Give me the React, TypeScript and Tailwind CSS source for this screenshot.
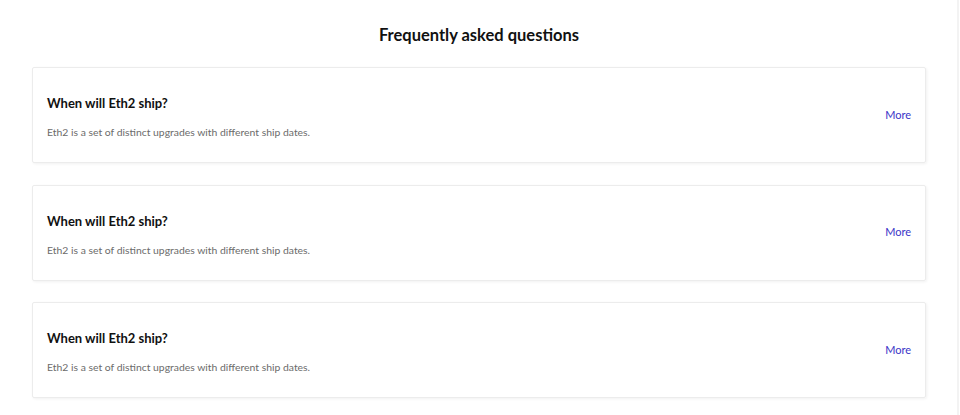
import React from 'react';

const faqs = [
  { q: 'When will Eth2 ship?', a: 'Eth2 is a set of distinct upgrades with different ship dates.' },
  { q: 'When will Eth2 ship?', a: 'Eth2 is a set of distinct upgrades with different ship dates.' },
  { q: 'When will Eth2 ship?', a: 'Eth2 is a set of distinct upgrades with different ship dates.' },
];

const App = () => {
  return (
    <div className="min-h-[415px] w-[960px] bg-white font-['Lato',sans-serif]">
      <div className="w-[959px] border-r-2 border-[#f3f3f3] min-h-[415px] pl-8 pr-[31px] pt-[23px]">
        <h1 className="text-center text-[16.5px] font-bold text-[#111] leading-6 mb-5">
          Frequently asked questions
        </h1>
        <div className="flex flex-col gap-[21.5px]">
          {faqs.map((item, i) => (
            <div
              key={i}
              className="flex items-center justify-between border border-[#ececec] rounded-[2px] shadow-[1px_1px_3px_rgba(0,0,0,0.06)] pl-[14px] pr-[14px] pt-6 pb-[21px]"
            >
              <div>
                <h2 className="text-[13px] font-bold text-[#111] leading-[22px]">{item.q}</h2>
                <p className="text-[10.4px] text-[#6b6b6b] leading-[18px] mt-[9px]">{item.a}</p>
              </div>
              <a href="#" className="text-[11px] text-[#3b35c8] mb-[3px]">
                More
              </a>
            </div>
          ))}
        </div>
      </div>
    </div>
  );
};

export default App;
